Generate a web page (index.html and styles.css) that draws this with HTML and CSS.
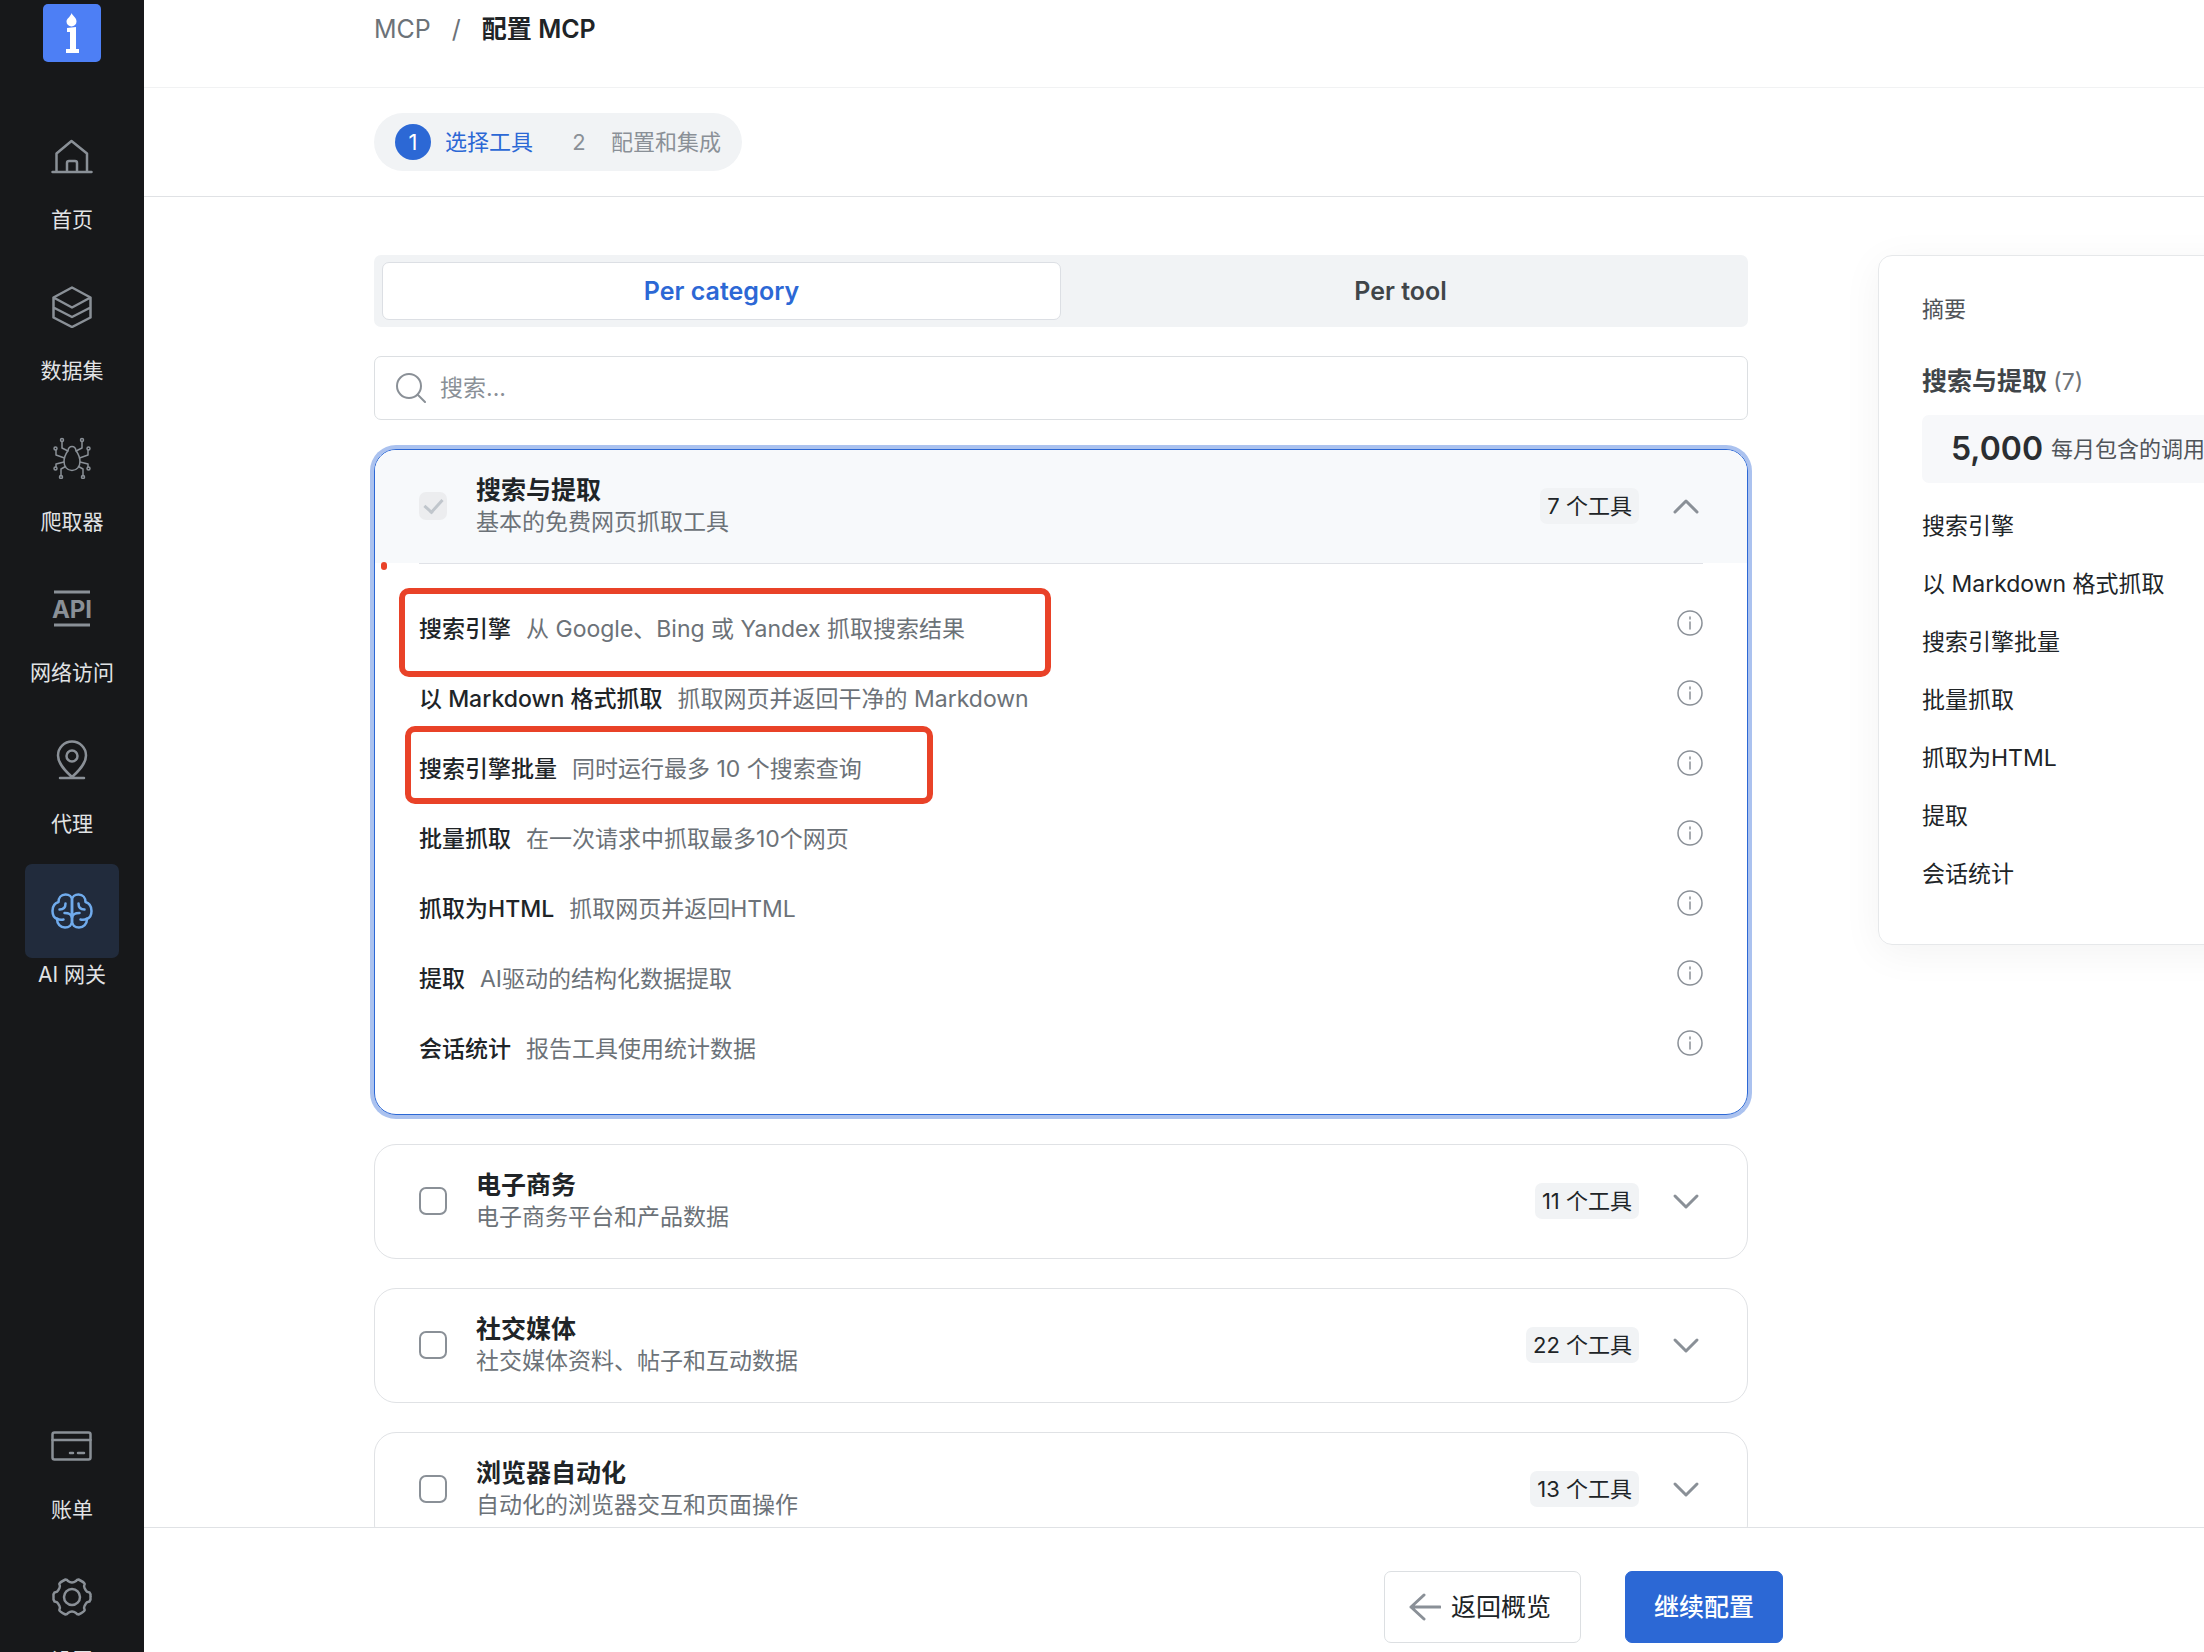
FILE: index.html
```html
<!DOCTYPE html>
<html lang="zh-CN">
<head>
  <meta charset="UTF-8">
  <meta name="viewport" content="width=device-width, initial-scale=1.0">
  <title>配置 MCP</title>
  <link rel="stylesheet" href="styles.css">
</head>
<body>

  <aside class="sidebar">
    <a class="logo" href="#" aria-label="Logo">
      <svg viewBox="0 0 58 58">
        <path d="M28.500 9c.8 2.500 5 4.500 5 8.500a5 5 0 0 1-10 0c0-3 4-4.500 5-8.500z"/>
        <path d="M24 24l9-1v22h3v4H23v-4h4V28h-3z"/>
      </svg>
    </a>

    <nav class="nav">
      <a class="nav-item" href="#">
        <span class="nav-icon">
          <svg viewBox="0 0 42 42"><path d="M5.500 37V18.500L20.500 6 36 18.500V37M1.500 37h39M16 37v-9a2 2 0 0 1 2-2h6a2 2 0 0 1 2 2v9"/></svg>
        </span>
        <span class="nav-label">首页</span>
      </a>
      <a class="nav-item" href="#">
        <span class="nav-icon">
          <svg viewBox="0 0 42 42"><path d="M21 1.500l18.500 10v20L21 41 2.500 31.500v-20zM2.500 11.500L21 21.500l18.500-10M2.500 21.500L21 31l18.500-9.500"/></svg>
        </span>
        <span class="nav-label">数据集</span>
      </a>
      <a class="nav-item" href="#">
        <span class="nav-icon">
          <svg class="thin" viewBox="0 0 42 42">
            <path d="M21 33.500c-5 0-8-4-8-9s3-9.500 4-11c.5-3 2-4 4-4s3.500 1 4 4c1 1.500 4 6 4 11s-3 9-8 9z"/>
            <path d="M17 14l-6-3V4.500M25 14l6-3V4.500M13.500 21L5 18v-5M28.500 21l8.500-3v-5M13 25l-8 2v3M29 25l8 2v3M14.500 29.500L10 32v7M27.500 29.500l4.500 2.500v7"/>
            <circle cx="11" cy="3" r="1.500"/><circle cx="31" cy="3" r="1.500"/>
            <circle cx="4.500" cy="11.500" r="1.500"/><circle cx="37.500" cy="11.500" r="1.500"/>
            <circle cx="4.500" cy="31.500" r="1.500"/><circle cx="37.500" cy="31.500" r="1.500"/>
            <circle cx="10" cy="40" r="1.500"/><circle cx="32" cy="40" r="1.500"/>
          </svg>
        </span>
        <span class="nav-label">爬取器</span>
      </a>
      <a class="nav-item" href="#">
        <span class="nav-icon">
          <svg class="api" viewBox="0 0 42 42"><path d="M3 4h36M3 37h36"/><text x="21" y="30" text-anchor="middle">API</text></svg>
        </span>
        <span class="nav-label">网络访问</span>
      </a>
      <a class="nav-item" href="#">
        <span class="nav-icon">
          <svg viewBox="0 0 42 42"><path d="M21 38C15 32.500 7 25 7 16.500a14 14 0 0 1 28 0C35 25 27 32.500 21 38zM9 39h24"/><circle cx="21" cy="17" r="5.500"/></svg>
        </span>
        <span class="nav-label">代理</span>
      </a>
      <a class="nav-item active" href="#">
        <span class="nav-icon">
          <svg viewBox="0 0 42 42">
            <path d="M21 10c0-3.500-3-5.500-6.500-5.500C10 4.500 7.500 8 7.500 12 4 13 1.500 16.500 1.500 21s2 7 4.500 8c0 5 3.500 8.500 8 8.500 4 0 7-2.500 7-6.500z"/>
            <path d="M21 10c0-3.500 3-5.500 6.500-5.500 4.500 0 7 3.500 7 7.500 3.500 1 6 4.500 6 9s-2 7-4.500 8c0 5-3.500 8.500-8 8.500-4 0-7-2.500-7-6.500z"/>
            <path d="M14.500 13.500c0 4-2.500 6-6 6M27.500 13.500c0 4 2.500 6 6 6M13.500 23c4 0 7 1 7.500 4.500M28.500 23c-4 0-7 1-7.500 4.500M6 28.500c2 1.500 4.500 1.500 6.500 1M36 28.500c-2 1.500-4.500 1.500-6.500 1"/>
          </svg>
        </span>
        <span class="nav-label">AI 网关</span>
      </a>
    </nav>

    <nav class="nav nav-bottom">
      <a class="nav-item" href="#">
        <span class="nav-icon">
          <svg viewBox="0 0 42 42"><rect x="1.500" y="7.500" width="38" height="27" rx="2"/><path d="M1.500 15h38M19 28h3M27 28h6"/></svg>
        </span>
        <span class="nav-label">账单</span>
      </a>
      <a class="nav-item" href="#">
        <span class="nav-icon">
          <svg viewBox="-21 -21 42 42">
            <path d="M17.500 4.500Q14.500 5 13.700 6.800L12.500 9Q11.500 10.800 12.700 13Q12.300 14.800 6.500 17.500Q5 17.500 4 16Q2 14.500 0 14.500Q-2 14.500-4 16Q-5 17.500-6.500 17.500Q-12.300 14.800-12.700 13Q-11.500 10.800-12.500 9L-13.700 6.800Q-14.500 5-17.500 4.500Q-19 3-18.500 0Q-19-3-17.500-4.500Q-14.500-5-13.700-6.800L-12.500-9Q-11.500-10.800-12.700-13Q-12.300-14.800-6.500-17.500Q-5-17.500-4-16Q-2-14.500 0-14.500Q2-14.500 4-16Q5-17.500 6.500-17.500Q12.300-14.800 12.700-13Q11.500-10.800 12.500-9L13.700-6.800Q14.500-5 17.500-4.500Q19-3 18.500 0Q19 3 17.500 4.500z"/>
            <circle r="8"/>
          </svg>
        </span>
        <span class="nav-label">设置</span>
      </a>
    </nav>
  </aside>

  <div class="page">
    <header class="breadcrumb">
      <a href="#">MCP</a>
      <span>/</span>
      <h1>配置 MCP</h1>
    </header>

    <div class="steps-bar">
      <ol class="steps">
        <li class="step current"><span class="step-number">1</span>选择工具</li>
        <li class="step"><span class="step-number">2</span>配置和集成</li>
      </ol>
    </div>

    <main class="content">
      <div class="tools">
        <div class="tabs">
          <button type="button" class="tab selected">Per category</button>
          <button type="button" class="tab">Per tool</button>
        </div>

        <label class="search">
          <svg viewBox="0 0 30 30"><circle cx="13" cy="13" r="12"/><path d="M22 22l7 7"/></svg>
          <input type="search" placeholder="搜索..." aria-label="搜索">
        </label>

        <section class="category open">
          <div class="category-header">
            <input type="checkbox" id="cat-search" checked disabled>
            <label for="cat-search">
              <strong>搜索与提取</strong>
              <span>基本的免费网页抓取工具</span>
            </label>
            <span class="badge">7 个工具</span>
            <button type="button" class="toggle" aria-label="收起"><svg viewBox="0 0 36 36"><path d="M7 24l11-11 11 11"/></svg></button>
          </div>
          <ul class="tool-list">
            <li><strong>搜索引擎</strong><span>从 Google、Bing 或 Yandex 抓取搜索结果</span><button type="button" class="info" aria-label="详情"><svg viewBox="0 0 26 26"><circle cx="13" cy="13" r="12"/><path d="M13 12v7M13 7v2"/></svg></button></li>
            <li><strong>以 Markdown 格式抓取</strong><span>抓取网页并返回干净的 Markdown</span><button type="button" class="info" aria-label="详情"><svg viewBox="0 0 26 26"><circle cx="13" cy="13" r="12"/><path d="M13 12v7M13 7v2"/></svg></button></li>
            <li><strong>搜索引擎批量</strong><span>同时运行最多 10 个搜索查询</span><button type="button" class="info" aria-label="详情"><svg viewBox="0 0 26 26"><circle cx="13" cy="13" r="12"/><path d="M13 12v7M13 7v2"/></svg></button></li>
            <li><strong>批量抓取</strong><span>在一次请求中抓取最多10个网页</span><button type="button" class="info" aria-label="详情"><svg viewBox="0 0 26 26"><circle cx="13" cy="13" r="12"/><path d="M13 12v7M13 7v2"/></svg></button></li>
            <li><strong>抓取为HTML</strong><span>抓取网页并返回HTML</span><button type="button" class="info" aria-label="详情"><svg viewBox="0 0 26 26"><circle cx="13" cy="13" r="12"/><path d="M13 12v7M13 7v2"/></svg></button></li>
            <li><strong>提取</strong><span>AI驱动的结构化数据提取</span><button type="button" class="info" aria-label="详情"><svg viewBox="0 0 26 26"><circle cx="13" cy="13" r="12"/><path d="M13 12v7M13 7v2"/></svg></button></li>
            <li><strong>会话统计</strong><span>报告工具使用统计数据</span><button type="button" class="info" aria-label="详情"><svg viewBox="0 0 26 26"><circle cx="13" cy="13" r="12"/><path d="M13 12v7M13 7v2"/></svg></button></li>
          </ul>
          <div class="mark mark-engine"></div>
          <div class="mark mark-batch"></div>
          <div class="mark-dot"></div>
        </section>

        <section class="category">
          <div class="category-header">
            <input type="checkbox" id="cat-commerce">
            <label for="cat-commerce">
              <strong>电子商务</strong>
              <span>电子商务平台和产品数据</span>
            </label>
            <span class="badge">11 个工具</span>
            <button type="button" class="toggle" aria-label="展开"><svg viewBox="0 0 36 36"><path d="M7 13l11 11 11-11"/></svg></button>
          </div>
        </section>

        <section class="category">
          <div class="category-header">
            <input type="checkbox" id="cat-social">
            <label for="cat-social">
              <strong>社交媒体</strong>
              <span>社交媒体资料、帖子和互动数据</span>
            </label>
            <span class="badge">22 个工具</span>
            <button type="button" class="toggle" aria-label="展开"><svg viewBox="0 0 36 36"><path d="M7 13l11 11 11-11"/></svg></button>
          </div>
        </section>

        <section class="category">
          <div class="category-header">
            <input type="checkbox" id="cat-browser">
            <label for="cat-browser">
              <strong>浏览器自动化</strong>
              <span>自动化的浏览器交互和页面操作</span>
            </label>
            <span class="badge">13 个工具</span>
            <button type="button" class="toggle" aria-label="展开"><svg viewBox="0 0 36 36"><path d="M7 13l11 11 11-11"/></svg></button>
          </div>
        </section>
      </div>

      <aside class="summary">
        <p class="summary-title">摘要</p>
        <h2>搜索与提取 <span>(7)</span></h2>
        <p class="quota"><strong>5,000</strong> 每月包含的调用次数</p>
        <ul>
          <li>搜索引擎</li>
          <li>以 Markdown 格式抓取</li>
          <li>搜索引擎批量</li>
          <li>批量抓取</li>
          <li>抓取为HTML</li>
          <li>提取</li>
          <li>会话统计</li>
        </ul>
      </aside>
    </main>

    <footer class="actions">
      <button type="button" class="btn">
        <svg viewBox="0 0 32 28"><path d="M31 14H2M15 2L2 14l13 12"/></svg>
        返回概览
      </button>
      <button type="button" class="btn primary">继续配置</button>
    </footer>
  </div>

</body>
</html>
```
FILE: styles.css
```css
/* Estilos generales */
* {
  box-sizing: border-box;
}

body {
  margin: 0;
  height: 100vh;
  display: flex;
  overflow: hidden;
  background-color: #ffffff;
  color: #202427;
  font-family: Inter, "Noto Sans CJK SC", sans-serif;
  font-size: 23px;
  line-height: 34px;
}

h1, h2, p, ul, ol {
  margin: 0;
  padding: 0;
}

ul, ol {
  list-style: none;
}

a {
  color: inherit;
  text-decoration: none;
}

button, input {
  font: inherit;
  color: inherit;
}

button {
  padding: 0;
  border: none;
  background: none;
  cursor: pointer;
}

svg {
  display: block;
  flex: none;
  fill: none;
  stroke: #8a9097;
  stroke-width: 2;
  stroke-linecap: round;
  stroke-linejoin: round;
}

/* Sidebar */
.sidebar {
  flex: none;
  width: 144px;
  height: calc(100vh + 26px);
  padding-top: 4px;
  display: flex;
  flex-direction: column;
  align-items: center;
  background-color: #17181a;
  color: #e1e3e5;
}

.logo {
  width: 58px;
  height: 58px;
  margin-bottom: 47px;
  border-radius: 5px;
  background-color: #4d7ff5;
}

.logo svg {
  fill: #ffffff;
  stroke: none;
}

.nav {
  display: flex;
  flex-direction: column;
  gap: 23px;
}

.nav-bottom {
  margin-top: auto;
}

.nav-item {
  display: flex;
  flex-direction: column;
  align-items: center;
  font-size: 21px;
}

.nav-icon {
  width: 94px;
  height: 94px;
  display: flex;
  justify-content: center;
  align-items: center;
  border-radius: 7px;
}

.nav-icon svg {
  width: 42px;
  height: 42px;
  stroke-width: 2.5;
}

.nav-icon .thin {
  stroke-width: 1.5;
}

.nav-icon .api {
  stroke-width: 3;
  stroke-linecap: butt;
}

.api text {
  fill: #8a9097;
  stroke: none;
  font-size: 24px;
  font-weight: 700;
}

.active .nav-icon {
  background-color: #212b3c;
}

.active svg {
  stroke: #70abec;
}

/* Page */
.page {
  flex: 1;
  min-width: 0;
  display: flex;
  flex-direction: column;
}

.breadcrumb {
  display: flex;
  gap: 21px;
  padding: 11px 230px 40px;
  border-bottom: 1px solid #f1f2f3;
  color: #6c7278;
  font-size: 25px;
  line-height: 36px;
}

.breadcrumb h1 {
  color: #202427;
  font-size: 25px;
  font-weight: 600;
}

.steps-bar {
  display: flex;
  padding: 25px 230px;
  border-bottom: 1px solid #e0e2e5;
}

.steps {
  display: flex;
  gap: 28px;
  padding: 11px 21px;
  border-radius: 29px;
  background-color: #f1f3f5;
}

.step {
  display: flex;
  align-items: center;
  gap: 14px;
  color: #8a9097;
  font-size: 22px;
  line-height: 36px;
}

.step-number {
  width: 36px;
  border-radius: 50%;
  text-align: center;
}

.current {
  color: #2c68d5;
}

.current .step-number {
  background-color: #2c68d5;
  color: #ffffff;
}

.content {
  flex: 1;
  min-height: 0;
  overflow: hidden;
  display: grid;
  grid-template-columns: minmax(0, 1fr) 326px;
  gap: 130px;
  align-items: start;
  padding: 58px 0 0 230px;
}

.tools {
  display: flex;
  flex-direction: column;
  gap: 29px;
}

/* Tabs */
.tabs {
  display: grid;
  grid-template-columns: 1fr 1fr;
  padding: 7px 8px;
  border-radius: 7px;
  background-color: #f1f3f5;
}

.tab {
  height: 58px;
  border-radius: 7px;
  color: #404549;
  font-size: 25px;
  font-weight: 600;
}

.selected {
  border: 1px solid #dcdfe4;
  background-color: #ffffff;
  color: #2c68d5;
}

/* Search */
.search {
  display: flex;
  align-items: center;
  gap: 14px;
  padding: 14px 21px;
  border: 1px solid #dcdfe2;
  border-radius: 7px;
}

.search svg {
  width: 30px;
  height: 30px;
}

.search input {
  flex: 1;
  height: 34px;
  padding: 0;
  border: none;
  outline: none;
}

.search input::placeholder {
  color: #8a9097;
}

/* Categories */
.category {
  position: relative;
  border: 1px solid #e0e2e5;
  border-radius: 22px;
}

.open {
  border-color: #2c68d5;
  box-shadow: 0 0 0 4px #abc2ef;
}

.category-header {
  display: flex;
  align-items: center;
  padding: 24px 43px 25px 44px;
  border-radius: 21px;
}

.open .category-header {
  border-radius: 21px 21px 0 0;
  background-color: #f7f9fb;
}

.category-header input {
  appearance: none;
  flex: none;
  display: grid;
  place-items: center;
  width: 28px;
  height: 28px;
  margin: 0 29px 0 0;
  border: 2px solid #8a9097;
  border-radius: 7px;
  background-color: #ffffff;
}

.category-header input:checked {
  border-color: #ecedef;
  background-color: #ecedef;
}

/* Tick of the checked box */
.category-header input:checked::before {
  content: "";
  width: 8px;
  height: 15px;
  margin-bottom: 4px;
  border: solid #c0c6cc;
  border-width: 0 3px 3px 0;
  transform: rotate(42deg);
}

.category-header label {
  flex: 1;
  display: flex;
  flex-direction: column;
  line-height: 32px;
  color: #6c7278;
}

.category-header strong {
  color: #202427;
  font-size: 25px;
  font-weight: 600;
}

.badge {
  padding: 0 7px;
  border-radius: 7px;
  background-color: #f1f3f5;
  font-size: 22px;
  line-height: 36px;
}

.toggle {
  margin-left: 29px;
}

.toggle svg {
  width: 36px;
  height: 36px;
  stroke-width: 3;
}

.tool-list {
  display: flex;
  flex-direction: column;
  gap: 32px;
  margin: 0 44px;
  padding: 46px 0;
  border-top: 1px solid #e0e2e7;
}

.tool-list li {
  display: flex;
  align-items: flex-start;
  gap: 15px;
  line-height: 38px;
  color: #6c7278;
}

.tool-list strong {
  color: #202427;
  font-weight: 500;
}

.info {
  margin-left: auto;
}

.info svg {
  width: 26px;
  height: 26px;
  stroke-width: 1.5;
}

/* Red marks over the list */
.mark {
  position: absolute;
  border: 6px solid #e94228;
  border-radius: 10px;
  pointer-events: none;
}

.mark-engine {
  left: 24px;
  top: 138px;
  width: 652px;
  height: 89px;
}

.mark-batch {
  left: 30px;
  top: 276px;
  width: 528px;
  height: 78px;
}

.mark-dot {
  position: absolute;
  left: 6px;
  top: 112px;
  width: 6px;
  height: 8px;
  border-radius: 3px;
  background-color: #e94228;
}

/* Summary */
.summary {
  width: 560px;
  padding: 36px 43px 53px;
  border: 1px solid #e6e8ea;
  border-radius: 14px;
  box-shadow: 0 8px 40px rgba(0, 0, 0, 0.05);
}

.summary-title {
  margin-bottom: 37px;
  color: #505459;
  font-size: 22px;
}

.summary h2 {
  margin-bottom: 15px;
  color: #404549;
  font-size: 25px;
  font-weight: 600;
  line-height: 36px;
}

.summary h2 span {
  color: #6c7278;
  font-size: 23px;
  font-weight: 400;
}

.quota {
  display: flex;
  align-items: center;
  gap: 8px;
  height: 68px;
  margin-bottom: 26px;
  padding: 0 29px;
  border-radius: 7px;
  background-color: #f7f8fa;
  color: #505459;
  font-size: 22px;
  white-space: nowrap;
}

.quota strong {
  color: #2b2e31;
  font-size: 32px;
  font-weight: 600;
}

.summary ul {
  display: flex;
  flex-direction: column;
  gap: 24px;
}

/* Footer */
.actions {
  display: flex;
  justify-content: flex-end;
  gap: 44px;
  padding: 43px 421px 9px;
  border-top: 1px solid #e0e2e5;
}

.btn {
  display: flex;
  align-items: center;
  gap: 10px;
  height: 72px;
  padding: 0 29px 0 24px;
  border: 1px solid #dcdfe2;
  border-radius: 7px;
  font-size: 25px;
}

.btn svg {
  width: 32px;
  height: 28px;
  stroke-width: 3;
}

.primary {
  padding: 0 28px;
  border-color: #2c68d5;
  background-color: #2c68d5;
  color: #ffffff;
  font-weight: 500;
}
```
